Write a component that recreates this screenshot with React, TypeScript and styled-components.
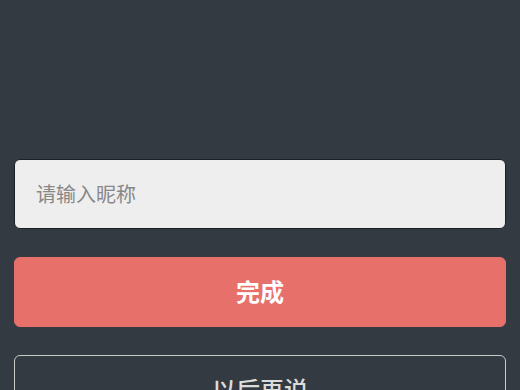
import styled, { createGlobalStyle } from "styled-components";

const GlobalStyle = createGlobalStyle`
  html, body {
    margin: 0;
    padding: 0;
    background: #333a42;
  }
  * {
    box-sizing: border-box;
  }
`;

const Page = styled.div`
  min-height: 390px;
  background: #333a42;
  padding: 159px 14px 0;
  display: flex;
  flex-direction: column;
  gap: 28px;
  font-family: "Noto Sans CJK SC", "Noto Sans", sans-serif;
`;

const NameInput = styled.input`
  height: 70px;
  width: 100%;
  padding: 0 21px 2px;
  border: 1px solid #1c2024;
  border-radius: 6px;
  background: #eeeeee;
  color: #333;
  font-family: inherit;
  font-size: 20px;
  outline: none;

  &::placeholder {
    color: #888888;
  }
`;

const ActionButton = styled.button<{ $variant?: "primary" | "ghost" }>`
  height: 70px;
  width: 100%;
  padding: 0 0 4px;
  border-radius: 6px;
  font-family: inherit;
  font-size: 24px;
  cursor: pointer;
  border: 1px solid
    ${({ $variant }) => ($variant === "ghost" ? "#c9c9c9" : "#e8706b")};
  background: ${({ $variant }) =>
    $variant === "ghost" ? "transparent" : "#e8706b"};
  color: ${({ $variant }) => ($variant === "ghost" ? "#dcdcdc" : "#ffffff")};
  font-weight: ${({ $variant }) => ($variant === "ghost" ? 500 : 700)};
`;

export default function App() {
  return (
    <>
      <GlobalStyle />
      <Page>
        <NameInput placeholder="请输入昵称" />
        <ActionButton>完成</ActionButton>
        <ActionButton $variant="ghost">以后再说</ActionButton>
      </Page>
    </>
  );
}
